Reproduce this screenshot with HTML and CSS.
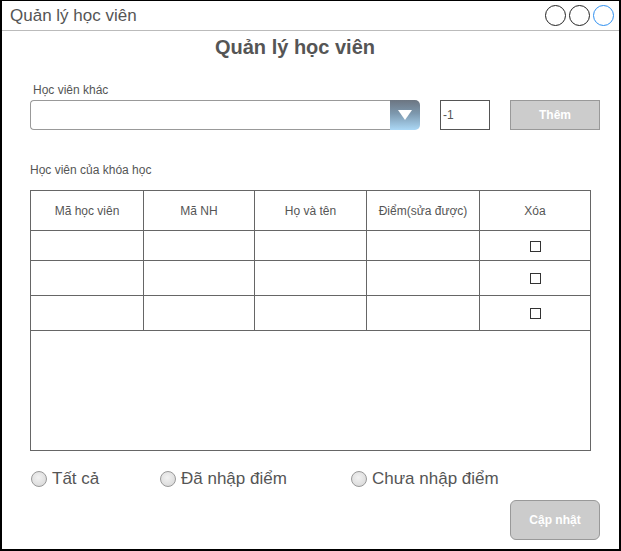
FILE: index.html
```html
<!DOCTYPE html>
<html lang="vi">
<head>
<meta charset="utf-8">
<title>Quản lý học viên</title>
<link rel="stylesheet" href="styles.css">
</head>
<body>
<div class="window">
  <div class="titlebar">
    <span class="title">Quản lý học viên</span>
    <div class="controls">
      <span class="dot"></span><span class="dot"></span><span class="dot dot-blue"></span>
    </div>
  </div>
  <div class="content">
    <h1 class="heading">Quản lý học viên</h1>
    <div class="label label-indent">Học viên khác</div>
    <div class="add-row">
      <div class="combo">
        <div class="combo-field"></div>
        <div class="combo-btn"><span class="tri"></span></div>
      </div>
      <div class="num-input">-1</div>
      <div class="btn btn-add">Thêm</div>
    </div>
    <div class="label label-list">Học viên của khóa học</div>
    <table class="grid">
      <thead>
        <tr class="row-head">
          <th class="c1">Mã học viên</th>
          <th class="c2">Mã NH</th>
          <th class="c3">Họ và tên</th>
          <th class="c4">Điểm(sửa được)</th>
          <th class="c5">Xóa</th>
        </tr>
      </thead>
      <tbody>
        <tr class="row-a"><td></td><td></td><td></td><td></td><td class="chk-cell"><span class="chk"></span></td></tr>
        <tr class="row-b"><td></td><td></td><td></td><td></td><td class="chk-cell"><span class="chk"></span></td></tr>
        <tr class="row-b"><td></td><td></td><td></td><td></td><td class="chk-cell"><span class="chk"></span></td></tr>
        <tr class="row-fill"><td colspan="5"></td></tr>
      </tbody>
    </table>
    <div class="radios">
      <label class="radio r1"><span class="circle"></span>Tất cả</label>
      <label class="radio r2"><span class="circle"></span>Đã nhập điểm</label>
      <label class="radio r3"><span class="circle"></span>Chưa nhập điểm</label>
    </div>
    <div class="footer">
      <div class="btn btn-update">Cập nhật</div>
    </div>
  </div>
</div>
</body>
</html>
```

FILE: styles.css
```css
* { box-sizing: border-box; }
html, body { margin: 0; padding: 0; background: #fff; }
body { font-family: "Liberation Sans", Arial, sans-serif; color: #555; }

.window {
  width: 621px;
  height: 551px;
  border: 2px solid #000;
  border-top-width: 1px;
  display: flex;
  flex-direction: column;
  background: #fff;
}

.titlebar {
  height: 30px;
  border-bottom: 1px solid #bbb;
  display: flex;
  align-items: center;
  justify-content: space-between;
  padding: 0 5px 0 8px;
}
.title { font-size: 17px; color: #555; line-height: 20px; }
.controls { display: flex; gap: 3px; }
.dot {
  width: 21px; height: 21px;
  border: 1.5px solid #222;
  border-radius: 50%;
}
.dot-blue { border-color: #2e8ff0; }

.content {
  flex: 1;
  display: flex;
  flex-direction: column;
  padding: 0 19px 0 28px;
}

.heading {
  margin: 4px 40px 0 0;
  font-size: 20px;
  line-height: 25px;
  font-weight: bold;
  text-align: center;
  color: #555;
}

.label { font-size: 12px; line-height: 14px; color: #555; }
.label-indent { margin-top: 23px; padding-left: 3px; }
.label-list { margin-top: 33px; }

.add-row {
  margin-top: 3px;
  display: flex;
  height: 30px;
  gap: 20px;
}
.combo { width: 390px; display: flex; }
.combo-field {
  flex: 1;
  border: 1px solid #999;
  border-right: none;
  border-radius: 4px 0 0 4px;
}
.combo-btn {
  width: 30px;
  border-radius: 0 5px 5px 0;
  background: linear-gradient(#6c7581, #7d98ae 45%, #abd8f6);
  display: flex;
  align-items: center;
  justify-content: center;
}
.tri {
  width: 0; height: 0;
  border-left: 7px solid transparent;
  border-right: 7px solid transparent;
  border-top: 10px solid #fff;
}
.num-input {
  width: 50px;
  border: 1px solid #555;
  font-size: 12px;
  line-height: 28px;
  padding-left: 2px;
  color: #555;
}
.btn {
  background: #ccc;
  border: 1px solid #999;
  color: #fff;
  font-size: 12px;
  font-weight: bold;
  display: flex;
  align-items: center;
  justify-content: center;
}
.btn-add { width: 90px; }

.grid {
  margin-top: 13px;
  width: 560px;
  border-collapse: collapse;
  table-layout: fixed;
}
.grid th, .grid td {
  border: 1px solid #666;
  padding: 0;
}
.grid th {
  font-size: 12px;
  font-weight: normal;
  color: #555;
}
.c1 { width: 113px; }
.c2 { width: 111px; }
.c3 { width: 112px; }
.c4 { width: 113px; }
.c5 { width: 111px; }
.row-head { height: 40px; }
.row-a { height: 30px; }
.row-b { height: 35px; }
.row-fill { height: 120px; }
.chk-cell { text-align: center; vertical-align: middle; }
.chk {
  display: inline-block;
  width: 11px; height: 11px;
  border: 1px solid #333;
  vertical-align: middle;
}

.radios {
  margin-top: 18px;
  display: flex;
  height: 20px;
  align-items: center;
  padding-left: 1px;
}
.radio {
  display: flex;
  align-items: center;
  gap: 5px;
  font-size: 17px;
  color: #555;
}
.r1 { width: 129px; }
.r2 { width: 191px; }
.circle {
  width: 16px; height: 16px;
  border-radius: 50%;
  border: 1px solid #999;
  background: radial-gradient(circle at 45% 40%, #f2f2f2, #d4d4d4);
}

.footer {
  margin-top: 11px;
  display: flex;
  justify-content: flex-end;
}
.btn-update {
  width: 90px;
  height: 40px;
  border-radius: 6px;
}
```
